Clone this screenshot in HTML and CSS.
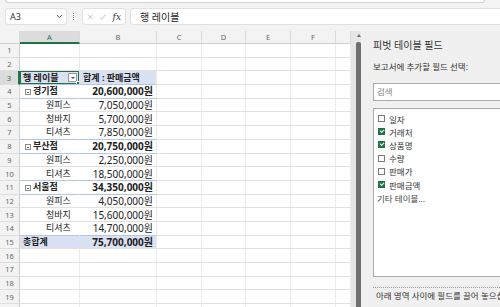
FILE: index.html
```html
<!DOCTYPE html>
<html lang="ko">
<head>
    <meta charset="UTF-8">
    <title>피벗 테이블</title>
    <link rel="stylesheet" href="styles.css">
</head>
<body>
    <div class="top-edge"><div class="ribbon-tail"></div></div>

    <div class="formula-bar">
        <div class="name-box">
            <span>A3</span>
            <svg class="chev" width="7" height="5" viewBox="0 0 7 5"><path d="M1 1l2.5 2.5L6 1" fill="none" stroke="#555" stroke-width="1"/></svg>
        </div>
        <div class="grip"></div>
        <div class="fx-box">
            <svg width="8" height="8" viewBox="0 0 8 8"><path d="M1 1l6 6M7 1L1 7" stroke="#b5b5b5" stroke-width="1"/></svg>
            <svg width="9" height="8" viewBox="0 0 9 8"><path d="M1 4.5l2.5 2.5L8 1" fill="none" stroke="#b5b5b5" stroke-width="1"/></svg>
            <span class="fx">fx</span>
        </div>
        <div class="formula-input">행 레이블</div>
    </div>

    <div class="main">
        <div class="sheet">
            <table class="grid">
                <colgroup>
                    <col class="c-head"><col class="c-a"><col class="c-b"><col class="c-c">
                    <col class="c-d"><col class="c-e"><col class="c-f"><col class="c-g">
                </colgroup>
                <thead>
                    <tr>
                        <th class="corner"></th>
                        <th class="sel">A</th><th>B</th><th>C</th><th>D</th><th>E</th><th>F</th><th></th>
                    </tr>
                </thead>
                <tbody>
                    <tr><th>1</th><td></td><td></td><td></td><td></td><td></td><td></td><td></td></tr>
                    <tr><th>2</th><td></td><td></td><td></td><td></td><td></td><td></td><td></td></tr>
                    <tr class="pv-head">
                        <th class="sel">3</th>
                        <td class="active">행 레이블<span class="filter-btn"></span></td>
                        <td>합계 : 판매금액</td>
                        <td></td><td></td><td></td><td></td><td></td>
                    </tr>
                    <tr class="pv-group">
                        <th>4</th><td class="lbl"><span class="minus"></span>경기점</td><td class="num">20,600,000원</td>
                        <td></td><td></td><td></td><td></td><td></td>
                    </tr>
                    <tr class="pv-item">
                        <th>5</th><td class="lbl">원피스</td><td class="num">7,050,000원</td>
                        <td></td><td></td><td></td><td></td><td></td>
                    </tr>
                    <tr class="pv-item">
                        <th>6</th><td class="lbl">청바지</td><td class="num">5,700,000원</td>
                        <td></td><td></td><td></td><td></td><td></td>
                    </tr>
                    <tr class="pv-item pv-last">
                        <th>7</th><td class="lbl">티셔츠</td><td class="num">7,850,000원</td>
                        <td></td><td></td><td></td><td></td><td></td>
                    </tr>
                    <tr class="pv-group">
                        <th>8</th><td class="lbl"><span class="minus"></span>부산점</td><td class="num">20,750,000원</td>
                        <td></td><td></td><td></td><td></td><td></td>
                    </tr>
                    <tr class="pv-item">
                        <th>9</th><td class="lbl">원피스</td><td class="num">2,250,000원</td>
                        <td></td><td></td><td></td><td></td><td></td>
                    </tr>
                    <tr class="pv-item pv-last">
                        <th>10</th><td class="lbl">티셔츠</td><td class="num">18,500,000원</td>
                        <td></td><td></td><td></td><td></td><td></td>
                    </tr>
                    <tr class="pv-group">
                        <th>11</th><td class="lbl"><span class="minus"></span>서울점</td><td class="num">34,350,000원</td>
                        <td></td><td></td><td></td><td></td><td></td>
                    </tr>
                    <tr class="pv-item">
                        <th>12</th><td class="lbl">원피스</td><td class="num">4,050,000원</td>
                        <td></td><td></td><td></td><td></td><td></td>
                    </tr>
                    <tr class="pv-item">
                        <th>13</th><td class="lbl">청바지</td><td class="num">15,600,000원</td>
                        <td></td><td></td><td></td><td></td><td></td>
                    </tr>
                    <tr class="pv-item pv-last">
                        <th>14</th><td class="lbl">티셔츠</td><td class="num">14,700,000원</td>
                        <td></td><td></td><td></td><td></td><td></td>
                    </tr>
                    <tr class="pv-total">
                        <th>15</th><td class="lbl">총합계</td><td class="num">75,700,000원</td>
                        <td></td><td></td><td></td><td></td><td></td>
                    </tr>
                    <tr><th>16</th><td></td><td></td><td></td><td></td><td></td><td></td><td></td></tr>
                    <tr><th>17</th><td></td><td></td><td></td><td></td><td></td><td></td><td></td></tr>
                    <tr><th>18</th><td></td><td></td><td></td><td></td><td></td><td></td><td></td></tr>
                    <tr><th>19</th><td></td><td></td><td></td><td></td><td></td><td></td><td></td></tr>
                    <tr><th>20</th><td></td><td></td><td></td><td></td><td></td><td></td><td></td></tr>
                </tbody>
            </table>
        </div>

        <div class="vscroll">
            <span class="up"></span>
            <div class="thumb"></div>
        </div>

        <div class="panel">
            <div class="panel-title">피벗 테이블 필드</div>
            <div class="panel-sub">보고서에 추가할 필드 선택:</div>
            <div class="search">검색</div>
            <ul class="fields">
                <li><span class="box"></span>일자</li>
                <li><span class="box on"></span>거래처</li>
                <li><span class="box on"></span>상품명</li>
                <li><span class="box"></span>수량</li>
                <li><span class="box"></span>판매가</li>
                <li><span class="box on"></span>판매금액</li>
                <li class="more">기타 테이블...</li>
            </ul>
            <div class="drag-hint">아래 영역 사이에 필드를 끌어 놓으십시오.</div>
        </div>
    </div>
</body>
</html>
```

FILE: styles.css
```css
body {
    margin: 0;
    width: 500px;
    height: 307px;
    overflow: hidden;
    background-color: #f3f3f3;
    font-family: "Noto Sans", "Noto Sans CJK KR", sans-serif;
    color: #222;
}

/* ribbon remnant at the very top */
.top-edge {
    height: 3px;
    padding: 0 15px 0 5px;
}

.ribbon-tail {
    height: 2px;
    background-color: #fff;
    border: 1px solid #d2d2d2;
    border-top: none;
    border-radius: 0 0 3px 3px;
}

/* formula bar */
.formula-bar {
    display: flex;
    align-items: center;
    height: 28px;
    padding: 0 0 1px 5px;
    box-sizing: border-box;
}

.name-box, .fx-box, .formula-input {
    height: 17px;
    background-color: #fff;
    border: 1px solid #e0e0e0;
    border-radius: 3px;
    box-sizing: border-box;
    display: flex;
    align-items: center;
}

.name-box {
    width: 62px;
    padding: 0 3px 0 4px;
    justify-content: space-between;
    font-size: 9px;
    color: #333;
}

.grip {
    width: 2px;
    height: 7px;
    margin: 0 6px 0 6px;
    border-left: 1px dotted #8a8a8a;
}

.fx-box {
    width: 44px;
    padding: 0 4px;
    gap: 6px;
}

.fx {
    font-family: "DejaVu Serif", serif;
    font-style: italic;
    font-size: 9px;
    color: #333;
}

.formula-input {
    flex: 1;
    margin-left: 4px;
    padding-left: 9px;
    border-right: none;
    border-radius: 3px 0 0 3px;
    font-size: 10px;
    color: #222;
}

/* sheet + side panel */
.main {
    display: flex;
    height: 276px;
}

.sheet {
    width: 351px;
    overflow: hidden;
    background-color: #fff;
}

.grid {
    table-layout: fixed;
    width: 351px;
    border-collapse: separate;
    border-spacing: 0;
    font-size: 9px;
}

.c-head { width: 20px; }
.c-a { width: 60px; }
.c-b { width: 77px; }
.c-c { width: 45px; }
.c-d { width: 44px; }
.c-e { width: 45px; }
.c-f { width: 45px; }
.c-g { width: 15px; }

.grid thead th {
    height: 13px;
    padding: 0;
    background-color: #f3f3f3;
    border-right: 1px solid #dadada;
    border-bottom: 1px solid #d0d0d0;
    font-family: "Noto Sans", sans-serif;
    font-weight: normal;
    font-size: 7.5px;
    color: #666;
    box-sizing: border-box;
}

.grid thead th.sel {
    background-color: #dcdcdc;
    color: #217346;
    border-bottom: 2px solid #217346;
}

.grid tbody tr {
    height: 13.7px;
}

.grid tbody th {
    padding: 0;
    background-color: #f3f3f3;
    border-right: 1px solid #d0d0d0;
    border-bottom: 1px solid #dedede;
    font-weight: normal;
    font-size: 7.5px;
    color: #666;
}

.grid tbody th.sel {
    background-color: #dcdcdc;
    color: #217346;
    border-right: 2px solid #217346;
}

.grid td {
    padding: 0 3px;
    border-right: 1px solid #ececec;
    border-bottom: 1px solid #e1e1e1;
    white-space: nowrap;
    overflow: hidden;
    line-height: 12px;
}

/* pivot table */
.pv-head td:nth-of-type(-n+2),
.pv-total td:nth-of-type(-n+2) {
    background-color: #d9e1f2;
    font-weight: bold;
}

.pv-head td:nth-of-type(-n+2) {
    border-bottom-color: #b4c6e7;
}

.pv-head td:first-of-type {
    border-right-color: #d9e1f2;
}

.pv-group td:nth-of-type(-n+2),
.pv-last td:nth-of-type(-n+2) {
    border-bottom-color: #b4c6e7;
}

.pv-group td {
    font-weight: bold;
}

.pv-group td:first-of-type,
.pv-item td:first-of-type,
.pv-total td:first-of-type,
.pv-head td:first-of-type,
.pv-group td:nth-of-type(2),
.pv-item td:nth-of-type(2),
.pv-total td:nth-of-type(2) {
    border-right-color: transparent;
}

.pv-group td:nth-of-type(2),
.pv-item td:nth-of-type(2),
.pv-total td:nth-of-type(2),
.pv-head td:nth-of-type(2) {
    border-right: 1px solid #ececec;
}

.pv-group .lbl {
    padding-left: 5px;
}

.pv-item .lbl {
    padding-left: 26px;
}

.num {
    text-align: right;
    padding-right: 3px;
    font-size: 10px;
}

.pv-total td {
    font-weight: bold;
}

.minus {
    display: inline-block;
    position: relative;
    width: 6px;
    height: 6px;
    margin-right: 2px;
    border: 1px solid #8c8c8c;
    box-sizing: border-box;
    vertical-align: -1px;
}

.minus::after {
    content: "";
    position: absolute;
    left: 1px;
    right: 1px;
    top: 2px;
    height: 1px;
    background-color: #666;
}

.active {
    position: relative;
}

.active::after {
    content: "";
    position: absolute;
    inset: -1px -1px -1px -1px;
    border: 2px solid #217346;
}

.active::before {
    content: "";
    position: absolute;
    right: -3px;
    bottom: -3px;
    width: 4px;
    height: 4px;
    background-color: #217346;
    border: 1px solid #fff;
    z-index: 1;
}

.filter-btn {
    position: absolute;
    right: 2px;
    top: 2px;
    width: 9px;
    height: 9px;
    background-color: #fafafa;
    border: 1px solid #9a9a9a;
    box-sizing: border-box;
}

.filter-btn::after {
    content: "";
    position: absolute;
    left: 2px;
    top: 3px;
    border-left: 2px solid transparent;
    border-right: 2px solid transparent;
    border-top: 2px solid #555;
}

/* vertical scrollbar */
.vscroll {
    width: 10px;
    background-color: #e6e6e6;
    display: flex;
    flex-direction: column;
    align-items: flex-end;
}

.up {
    width: 0;
    height: 0;
    margin: 3px 0 5px;
    border-left: 2.5px solid transparent;
    border-right: 2.5px solid transparent;
    border-bottom: 3px solid #6d6d6d;
}

.thumb {
    flex: 1;
    width: 5px;
    background-color: #707070;
    border-radius: 2px 2px 0 0;
}

/* pivot field list */
.panel {
    flex: 1;
    padding-left: 12px;
    overflow: hidden;
    background-color: #f0f0f0;
    font-size: 8.5px;
    color: #333;
}

.panel-title {
    margin-top: 7px;
    font-size: 10px;
    line-height: 14px;
    white-space: nowrap;
}

.panel-sub {
    margin-top: 9px;
    line-height: 12px;
    white-space: nowrap;
}

.search {
    width: 150px;
    height: 18px;
    margin-top: 10px;
    padding-left: 3px;
    box-sizing: border-box;
    background-color: #fff;
    border: 1px solid #ababab;
    line-height: 16px;
    color: #8a8a8a;
}

.fields {
    list-style: none;
    width: 150px;
    height: 169px;
    margin: 7px 0 0;
    padding: 3px 0 0 3px;
    box-sizing: border-box;
    background-color: #fff;
    border: 1px solid #ababab;
}

.fields li {
    display: flex;
    align-items: center;
    gap: 4px;
    height: 13.2px;
    white-space: nowrap;
}

.fields li.more {
    color: #444;
}

.box {
    width: 7px;
    height: 7px;
    margin-left: 1px;
    border: 1px solid #7a7a7a;
    box-sizing: border-box;
    background-color: #fff;
    position: relative;
}

.box.on {
    background-color: #217346;
    border-color: #217346;
}

.box.on::after {
    content: "";
    position: absolute;
    left: 1px;
    top: 0;
    width: 3px;
    height: 2px;
    border-left: 1px solid #fff;
    border-bottom: 1px solid #fff;
    transform: rotate(-45deg);
}

.drag-hint {
    margin-top: 10px;
    padding: 2px 0 0 3px;
    border-top: 1px dotted #9a9a9a;
    line-height: 12px;
    white-space: nowrap;
}
```
